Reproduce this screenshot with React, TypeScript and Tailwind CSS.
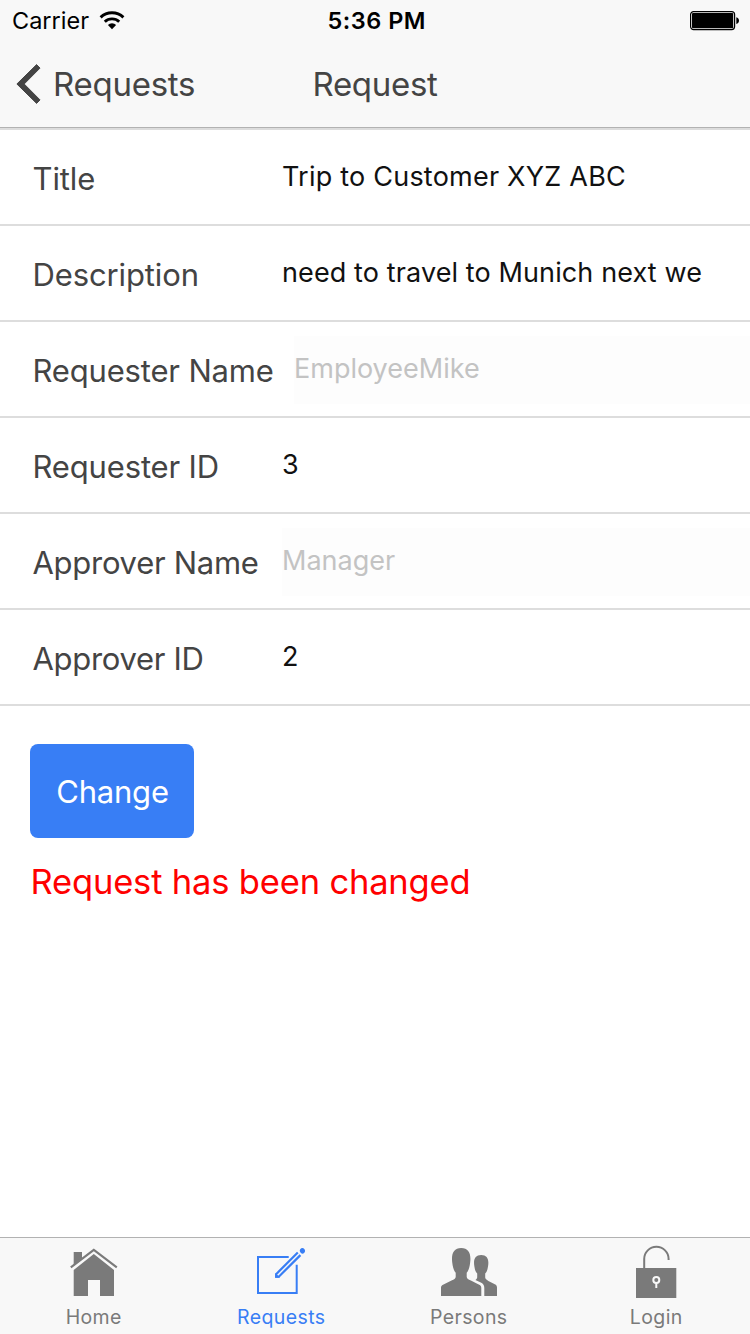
import type { ReactNode } from "react";

type Field = {
  label: string;
  value: string;
  disabled?: boolean;
  labelClass?: string;
  valueClass?: string;
};

const fields: Field[] = [
  { label: "Title", value: "Trip to Customer XYZ ABC", labelClass: "tracking-[-0.1px]", valueClass: "tracking-[0.22px]" },
  { label: "Description", value: "need to travel to Munich next we", labelClass: "tracking-[-0.12px]", valueClass: "tracking-[0.11px]" },
  { label: "Requester Name", value: "EmployeeMike", disabled: true, labelClass: "w-[261.5px] tracking-[-0.17px]" },
  { label: "Requester ID", value: "3", labelClass: "tracking-[-0.15px]" },
  { label: "Approver Name", value: "Manager", disabled: true, labelClass: "tracking-[-0.28px]" },
  { label: "Approver ID", value: "2", labelClass: "tracking-[-0.3px]" },
];

function StatusBar() {
  return (
    <div className="grid h-10 grid-cols-[1fr_auto_1fr] items-center text-[23.5px] leading-10 text-black">
      <div className="flex items-center pl-3">
        <span className="pt-0.5 leading-[38px]">Carrier</span>
        <svg className="ml-2.5" width="26" height="20" viewBox="0 0 26 20" fill="none" stroke="#000" strokeWidth="2.9">
          <path d="M1.6 7.4a16.4 16.4 0 0 1 22.8 0" />
          <path d="M5.8 11.8a10.4 10.4 0 0 1 14.4 0" />
          <path d="M13 19.2L8.9 15a5.8 5.8 0 0 1 8.2 0z" fill="#000" stroke="none" />
        </svg>
      </div>
      <span className="pt-0.5 pl-[3.5px] font-semibold leading-[38px] tracking-[0.5px]">5:36 PM</span>
      <div className="flex justify-end pt-px pr-2.5">
        <svg width="50" height="20" viewBox="0 0 50 20">
          <rect x="0.6" y="0.6" width="44" height="18" rx="3" fill="none" stroke="#000" strokeWidth="1.2" />
          <rect x="2" y="2" width="41.2" height="15.2" rx="1" />
          <path d="M46.3 6.2c1.7.3 2.7 1.7 2.7 3.4s-1 3.1-2.7 3.4z" />
        </svg>
      </div>
    </div>
  );
}

function NavBar() {
  return (
    <div className="grid h-[87px] grid-cols-[1fr_auto_1fr] text-[33px] leading-[88px] text-[#444]">
      <div className="flex items-center pl-4">
        <svg width="25" height="42" viewBox="0 0 25 42" fill="#444" stroke="#444" strokeLinejoin="round">
          <path d="M.9 21L20.6 1.6l3.4 3.5L8.2 21l15.800 15.900-3.400 3.500z" strokeWidth="1" />
        </svg>
        <span className="ml-3 tracking-[-0.25px]">Requests</span>
      </div>
      <h1 className="tracking-[-0.3px]">Request</h1>
    </div>
  );
}

function FieldRow({ field }: { field: Field }) {
  return (
    <label className="flex h-24 border-b-2 border-[#ddd] pl-[32.5px]">
      <span className={`min-w-[249.5px] shrink-0 whitespace-nowrap text-[31px] leading-[98px] text-[#444] ${field.labelClass ?? ""}`}>
        {field.label}
      </span>
      <span
        className={`mt-[14px] h-[68px] flex-1 whitespace-nowrap text-[27px] leading-[66px] ${
          field.disabled ? "bg-[#fdfdfd] text-[#c3c3c3]" : "text-[#111]"
        } ${field.valueClass ?? ""}`}
      >
        {field.value}
      </span>
    </label>
  );
}

function HomeIcon() {
  return (
    <svg width="60" height="60" viewBox="0 0 60 60" fill="currentColor">
      <path d="M9.7 10H18v7l-8.3 6.4z" />
      <path d="M6.8 25.4L29.8 7.8l23 17.6" fill="none" stroke="currentColor" strokeWidth="2.1" />
      <path d="M29.8 12L50 28v26H36V38H24v16H9.7V28z" />
    </svg>
  );
}

function ComposeIcon() {
  return (
    <svg width="60" height="60" viewBox="0 0 60 60" fill="none" stroke="currentColor" strokeWidth="2">
      <path d="M37.7 15H7v36h38.7V22.7" />
      <path d="M46.8 10.5L25.2 32.1v2.6h2.6L49.4 13.1" strokeWidth="2.2" />
      <path d="M24.1 31l4.900 4.800h-4.900z" fill="currentColor" stroke="none" />
      <path d="M49.2 7.2c1.2-1.4 3-1.4 4.100-.3s1.100 2.900-.2 4.100c-1.200 1.100-2.200.9-3.200-.1s-1.600-2.600-.7-3.700z" fill="currentColor" stroke="none" />
    </svg>
  );
}

function PeopleIcon() {
  return (
    <svg width="60" height="60" viewBox="0 0 60 60" fill="currentColor">
      <path d="M2 54v-8c0-1.600.7-2.600 2-3.200l8.500-4.200c2.700-1.300 4-2 4.200-3.600v-4.200c-2.200-2.500-2.900-6.200-3.400-9.800C12 12 14.500 6 22.200 6s10.200 6 8.900 15c-.5 3.600-1.200 7.300-3.400 9.800V35c.2 1.600 1.500 2.300 4.200 3.600l8.300 4.200c1.400.6 2.100 1.600 2.100 3.200v8z" />
      <path d="M45.300 54v-8c0-3-1.500-4.500-3.500-5.400L36.400 38c1-.7 1.800-1.600 1.800-2.800v-3.600c-1.800-1.700-2.300-4.400-2.800-7.200-1.300-6.800.8-11.400 6.800-11.400s8.100 4.600 6.800 11.400c-.5 2.800-1 5.500-2.800 7.200v4c.2 1.500 1.200 2.300 3.200 3.300l6.400 3.300c1.500.7 2.200 1.800 2.200 3.400V54z" />
    </svg>
  );
}

function UnlockIcon() {
  return (
    <svg width="60" height="60" viewBox="0 0 60 60">
      <path d="M18.2 27V17a12.2 12.2 0 0 1 24.4 0v1.100" fill="none" stroke="currentColor" strokeWidth="2" />
      <path d="M10 26h40.3v30H10z" fill="currentColor" />
      <circle cx="30.3" cy="38" r="3" fill="none" stroke="#f8f8f8" strokeWidth="2" />
      <path d="M30.3 41v5" stroke="#f8f8f8" strokeWidth="2" />
    </svg>
  );
}

function Tab({ label, active, children }: { label: string; active?: boolean; children: ReactNode }) {
  return (
    <div className={`flex flex-col items-center pt-1 ${active ? "text-[#387ef5]" : "text-[#7a7a7a]"}`}>
      {children}
      <span className="text-[19.5px] leading-[30px] tracking-[0.4px]">{label}</span>
    </div>
  );
}

export default function App() {
  return (
    <div className="flex h-[1334px] w-[750px] flex-col overflow-hidden bg-white font-['Inter','Liberation_Sans',sans-serif] font-normal">
      <header className="border-b border-[#b2b2b2] bg-[#f8f8f8]">
        <StatusBar />
        <NavBar />
      </header>
      <main className="flex flex-1 flex-col items-start">
        <div className="w-full border-t-2 border-[#ddd]">
          {fields.map((f) => (
            <FieldRow key={f.label} field={f} />
          ))}
        </div>
        <button className="mt-[38px] ml-[30px] h-[94px] w-[164px] rounded-[8px] bg-[#387ef5] pt-0.5 pl-px text-[31px] leading-[92px] tracking-[-0.2px] text-white">
          Change
        </button>
        <p className="ml-[30.5px] pt-5 text-[34.5px] leading-12 tracking-[-0.17px] text-[#f00]">Request has been changed</p>
      </main>
      <nav className="grid h-[97px] grid-cols-4 border-t border-[#b2b2b2] bg-[#f8f8f8]">
        <Tab label="Home">
          <HomeIcon />
        </Tab>
        <Tab label="Requests" active>
          <ComposeIcon />
        </Tab>
        <Tab label="Persons">
          <PeopleIcon />
        </Tab>
        <Tab label="Login">
          <UnlockIcon />
        </Tab>
      </nav>
    </div>
  );
}
